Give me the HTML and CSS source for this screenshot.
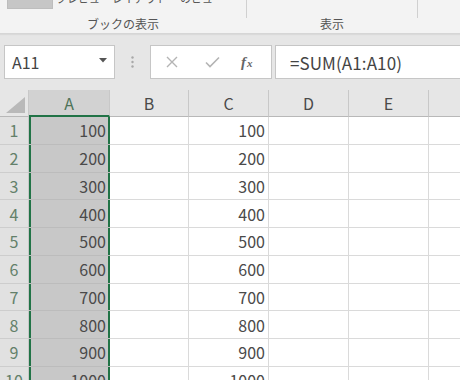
FILE: index.html
```html
<!DOCTYPE html>
<html lang="ja">
<head>
<meta charset="utf-8">
<link rel="stylesheet" href="styles.css">
</head>
<body>
<div class="ribbon">
  <div class="ribbon-top">
    <div class="thumb"></div>
    <span class="btn-label l1">プレビュー</span>
    <span class="btn-label l2">レイアウト</span>
    <span class="btn-label l3">のビュー</span>
  </div>
  <div class="groups">
    <div class="group g1">ブックの表示</div>
    <div class="sep"></div>
    <div class="group g2">表示</div>
    <div class="sep"></div>
    <div class="group g3"></div>
  </div>
</div>
<div class="fbar">
  <div class="namebox">
    <span class="nb-text">A11</span>
    <svg class="nb-arrow" width="8" height="5" viewBox="0 0 8 5"><path d="M0 0 H8 L4 4.5 Z" fill="#555"/></svg>
  </div>
  <div class="dots">
    <svg width="3" height="12" viewBox="0 0 3 12"><circle cx="1.5" cy="1.5" r="1.2" fill="#a8a8a8"/><circle cx="1.5" cy="6" r="1.2" fill="#a8a8a8"/><circle cx="1.5" cy="10.5" r="1.2" fill="#a8a8a8"/></svg>
  </div>
  <div class="fbuttons">
    <svg class="fb-x" width="12" height="12" viewBox="0 0 12 12"><path d="M1 1 L11 11 M11 1 L1 11" stroke="#b4b4b4" stroke-width="1.4" fill="none"/></svg>
    <svg class="fb-check" width="15" height="12" viewBox="0 0 15 12"><path d="M1 6.5 L5 10.5 L14 1.5" stroke="#b4b4b4" stroke-width="1.6" fill="none"/></svg>
    <span class="fx">f<span class="fx-x">x</span></span>
  </div>
  <div class="formula">=SUM(A1:A10)</div>
</div>
<div class="sheet">
  <div class="corner"><svg width="19" height="16" viewBox="0 0 19 16"><path d="M19 0 V16 H0 Z" fill="#b9b9b9"/></svg></div>
  <div class="ch sel">A</div>
  <div class="ch">B</div>
  <div class="ch">C</div>
  <div class="ch">D</div>
  <div class="ch">E</div>
  <div class="ch last"></div>

  <div class="rh">1</div><div class="c a first">100</div><div class="c"></div><div class="c">100</div><div class="c"></div><div class="c"></div><div class="c last"></div>
  <div class="rh">2</div><div class="c a">200</div><div class="c"></div><div class="c">200</div><div class="c"></div><div class="c"></div><div class="c last"></div>
  <div class="rh">3</div><div class="c a">300</div><div class="c"></div><div class="c">300</div><div class="c"></div><div class="c"></div><div class="c last"></div>
  <div class="rh">4</div><div class="c a">400</div><div class="c"></div><div class="c">400</div><div class="c"></div><div class="c"></div><div class="c last"></div>
  <div class="rh">5</div><div class="c a">500</div><div class="c"></div><div class="c">500</div><div class="c"></div><div class="c"></div><div class="c last"></div>
  <div class="rh">6</div><div class="c a">600</div><div class="c"></div><div class="c">600</div><div class="c"></div><div class="c"></div><div class="c last"></div>
  <div class="rh">7</div><div class="c a">700</div><div class="c"></div><div class="c">700</div><div class="c"></div><div class="c"></div><div class="c last"></div>
  <div class="rh">8</div><div class="c a">800</div><div class="c"></div><div class="c">800</div><div class="c"></div><div class="c"></div><div class="c last"></div>
  <div class="rh">9</div><div class="c a">900</div><div class="c"></div><div class="c">900</div><div class="c"></div><div class="c"></div><div class="c last"></div>
  <div class="rh">10</div><div class="c a">1000</div><div class="c"></div><div class="c">1000</div><div class="c"></div><div class="c"></div><div class="c last"></div>
</div>
</body>
</html>
```

FILE: styles.css
```css
* { box-sizing: border-box; }
html, body {
  margin: 0;
  padding: 0;
  width: 460px;
  height: 380px;
  overflow: hidden;
  background: #e6e6e6;
  font-family: "Noto Sans CJK JP", "Noto Sans", sans-serif;
  color: #444;
}

/* ribbon */
.ribbon {
  height: 34px;
  background: #f3f3f3;
  border-bottom: 1px solid #d6d6d6;
  box-shadow: 0 1px 1px rgba(0,0,0,0.05);
  display: flex;
  flex-direction: column;
}
.ribbon-top {
  height: 10px;
  overflow: hidden;
  display: flex;
  align-items: flex-start;
}
.thumb {
  width: 46px;
  height: 9px;
  margin-left: 7px;
  background: #c6c6c6;
  border: 1px solid #bdbdbd;
  border-top: none;
}
.btn-label {
  font-size: 11px;
  line-height: 12px;
  height: 12px;
  margin-top: -8px;
  color: #555;
  white-space: nowrap;
}
.l1 { margin-left: 3px; width: 53px; }
.l2 { margin-left: 3px; width: 68px; }
.l3 { margin-left: 0; }

.groups {
  flex: 1;
  display: flex;
}
.group {
  font-size: 12px;
  color: #555;
  display: flex;
  align-items: center;
  justify-content: center;
  padding-top: 3px;
  height: 23px;
}
.g1 { width: 246px; }
.g2 { width: 170px; }
.g3 { flex: 1; }
.sep {
  width: 1px;
  height: 18px;
  margin-top: -10px;
  background: #d0d0d0;
  align-self: flex-start;
}

/* formula bar */
.fbar {
  height: 56px;
  padding: 11px 0 11px 4px;
  display: flex;
  align-items: stretch;
}
.namebox {
  width: 111px;
  background: #fff;
  border: 1px solid #c6c6c6;
  display: flex;
  align-items: center;
  justify-content: space-between;
  padding: 0 7px 0 7px;
}
.nb-text {
  font-size: 16px;
  color: #444;
}
.nb-arrow { margin-top: -3px; }
.dots {
  width: 35px;
  display: flex;
  align-items: center;
  justify-content: center;
}
.fbuttons {
  width: 122px;
  background: #fff;
  border: 1px solid #c6c6c6;
  display: flex;
  align-items: center;
  padding-left: 15px;
}
.fb-x { margin-right: 27px; }
.fb-check { margin-right: 21px; }
.fx {
  font-family: "Liberation Serif", serif;
  font-style: italic;
  font-weight: bold;
  font-size: 15px;
  color: #666;
  line-height: 1;
}
.fx-x {
  font-size: 11px;
  margin-left: 1px;
}
.formula {
  flex: 1;
  margin-left: 3px;
  background: #fff;
  border: 1px solid #c6c6c6;
  border-right: none;
  font-size: 17px;
  color: #444;
  display: flex;
  align-items: center;
  padding-left: 14px;
  letter-spacing: 0.1px;
}

/* sheet */
.sheet {
  display: grid;
  grid-template-columns: 29px 81px 79px 80px 80px 80px 1fr;
  grid-template-rows: 27px;
  grid-auto-rows: 27.75px;
  background: #fff;
}
.corner {
  background: #e6e6e6;
  border-right: 1px solid #c8c8c8;
  border-bottom: 1px solid #b8b8b8;
  display: flex;
  align-items: flex-end;
  justify-content: flex-end;
  padding: 0 3px 3px 0;
}
.ch {
  background: #e6e6e6;
  border-right: 1px solid #c8c8c8;
  border-bottom: 1px solid #b8b8b8;
  font-size: 16px;
  color: #4a4a4a;
  display: flex;
  align-items: center;
  justify-content: center;
}
.ch.sel {
  background: #d2d2d2;
  color: #4d7258;
  border-bottom: 2px solid #217346;
}
.ch.last { border-right: none; }
.rh {
  background: #e1e1e1;
  border-right: 1px solid #c8c8c8;
  border-bottom: 1px solid #cdcdcd;
  font-size: 16px;
  color: #63806a;
  display: flex;
  align-items: center;
  justify-content: center;
}
.c {
  border-right: 1px solid #dadada;
  border-bottom: 1px solid #dadada;
  font-size: 16px;
  color: #4a4a4a;
  display: flex;
  align-items: center;
  justify-content: flex-end;
  padding-right: 3px;
}
.c.last { border-right: none; }
.c.a {
  background: #c8c8c8;
  border-bottom: 1px solid #bcbcbc;
  border-right: none;
  box-shadow: inset 2px 0 0 #217346, inset -2px 0 0 #217346;
  padding-right: 4px;
}
```
